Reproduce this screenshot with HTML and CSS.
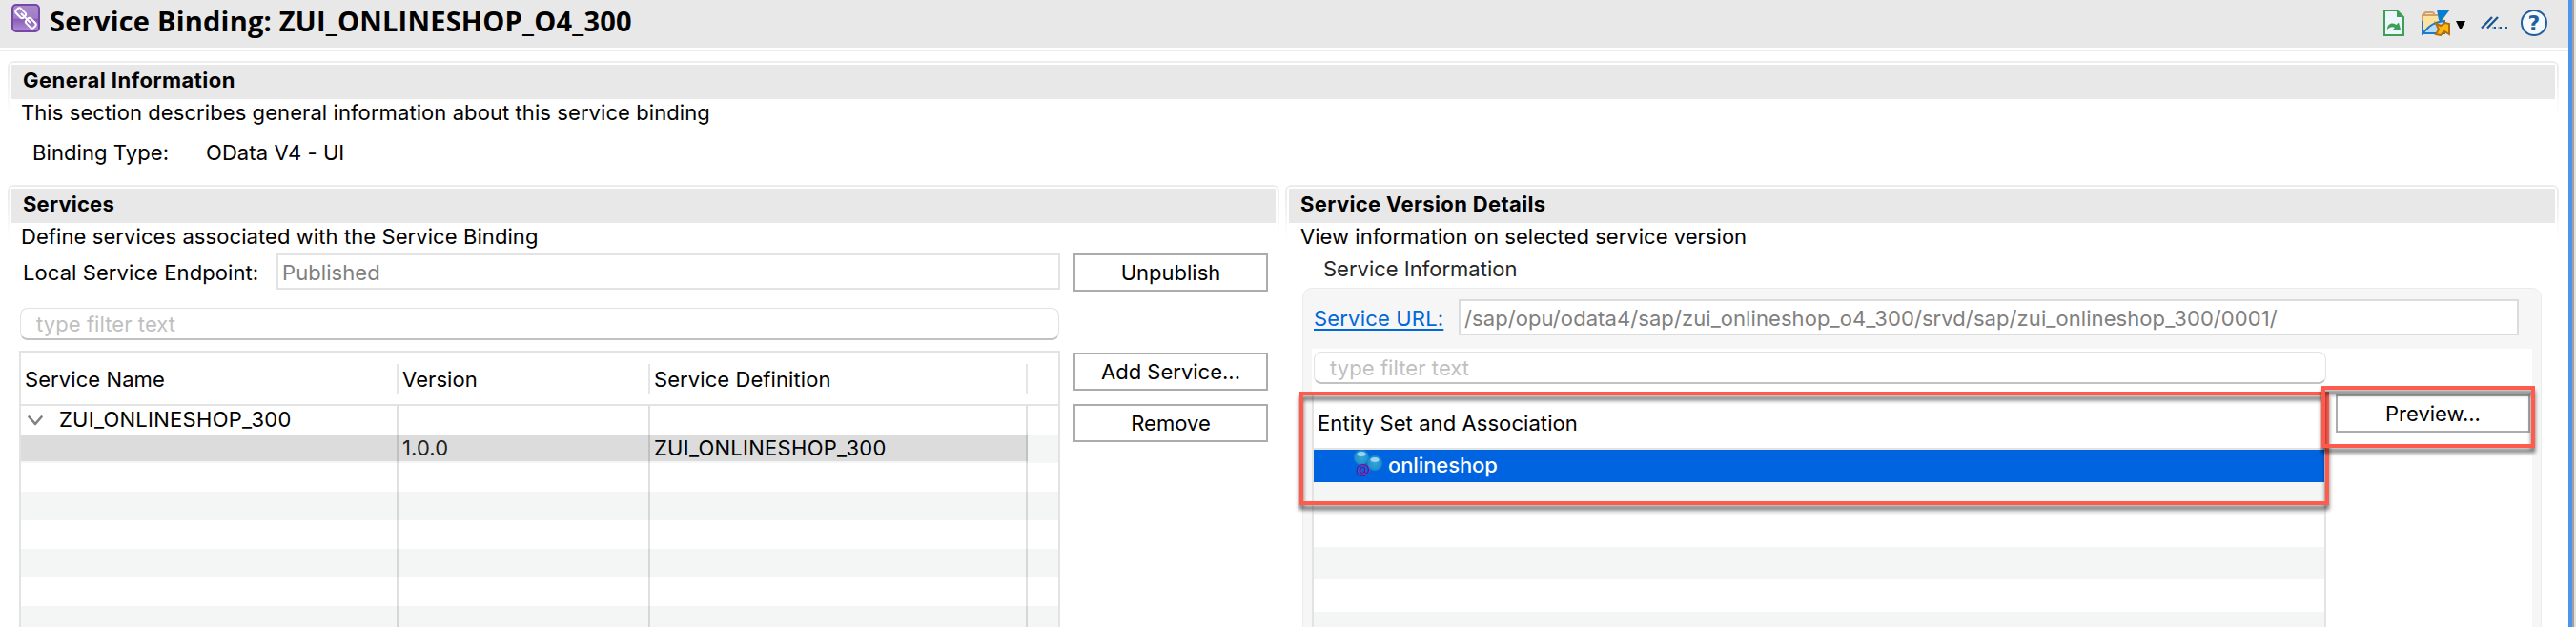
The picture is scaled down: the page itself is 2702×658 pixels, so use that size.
FILE: index.html
```html
<!DOCTYPE html>
<html lang="en">
<head>
<meta charset="utf-8">
<title>Service Binding</title>
<link rel="stylesheet" href="styles.css">
</head>
<body>
<main class="editor">
  <header class="form-head">
    <svg class="head-icon" width="30" height="30" viewBox="0 0 30 30">
      <defs><linearGradient id="pv" x1="0" y1="0" x2="0" y2="1"><stop offset="0" stop-color="#a98acb"/><stop offset=".5" stop-color="#a07dc8"/><stop offset=".55" stop-color="#8a5cb8"/><stop offset="1" stop-color="#b292d6"/></linearGradient></defs>
      <rect x="1" y="1" width="28" height="28" rx="4" fill="url(#pv)" stroke="#7548a8" stroke-width="2"/>
      <g fill="none" stroke="#fff" stroke-width="2" transform="rotate(45 15 15)">
        <rect x="2" y="11.500" width="11" height="7" rx="2.500"/>
        <rect x="17" y="11.500" width="11" height="7" rx="2.500"/>
        <path d="M8 15H22"/>
      </g>
    </svg>
    <h1 class="title">Service Binding: ZUI_ONLINESHOP_O4_300</h1>
    <div class="tools">
      <svg class="tool-doc" width="22" height="28" viewBox="0 0 22 28"><path d="M1 1H14L21 8V27H1Z" fill="#eef6fb" stroke="#3c9f57" stroke-width="2"/><path d="M14 1V8H21Z" fill="#3c9f57"/><path d="M4 21C4 15 9 13 13.500 16L16 13.500L18 21H10L12 19C9 17.500 6.500 18.500 4 21Z" fill="#3c9f57"/></svg>
      <svg class="tool-folder" width="30" height="28" viewBox="0 0 30 28"><path d="M3 6V4.500Q3 3 5 3H11Q13 3 13 5V6" fill="#f3e3c4" stroke="#c9a377" stroke-width="2"/><path d="M1 6H25V25H1Z" fill="#fbe3a0"/><path d="M1 13V6H17" fill="none" stroke="#d2a060" stroke-width="2"/><path d="M1 12V25L8 18Q14 13 24 12V25H1" fill="#b9dbfa" stroke="#2079ca" stroke-width="2"/><path d="M16 0H30L20 13L18 11Z" fill="#0b7dd0"/><path d="M15 14.500L20 17L25 14L29 15V26L24 23L20 27L15 26L18 21Z" fill="#fcb813" stroke="#b56f08" stroke-width="2"/></svg>
      <svg class="tool-caret" width="10" height="8" viewBox="0 0 10 8"><path d="M0 0H10L6 8H4Z" fill="#000"/></svg>
      <svg class="tool-trace" width="30" height="14" viewBox="0 0 30 14"><g stroke="#1c5791" stroke-width="2.400" fill="none"><path d="M1 12.500L12 1M7 12.500L18 1"/></g><g fill="#1c5791"><rect x="14" y="11" width="2" height="2"/><rect x="20" y="11" width="2" height="2"/><rect x="26" y="11" width="2" height="2"/></g><g fill="#8fb4d8"><rect x="12" y="11" width="2" height="2"/><rect x="18" y="11" width="2" height="2"/></g></svg>
      <span class="tool-help">?</span>
    </div>
  </header>

  <section class="section general">
    <h2 class="section-head head-general">General Information</h2>
    <p class="desc">This section describes general information about this service binding</p>
    <div class="binding"><span class="binding-label">Binding Type:</span><span>OData V4 - UI</span></div>
  </section>

  <div class="columns">
    <section class="section services">
      <h2 class="section-head">Services</h2>
      <p class="desc">Define services associated with the Service Binding</p>
      <div class="endpoint">
        <label class="endpoint-label">Local Service Endpoint:</label>
        <div class="field endpoint-field">Published</div>
        <button class="btn">Unpublish</button>
      </div>
      <div class="filter filter-left">type filter text</div>
      <div class="services-body">
        <div class="table">
          <div class="tr thead"><div class="th">Service Name</div><div class="th">Version</div><div class="th">Service Definition</div></div>
          <div class="tr"><div class="td parent"><svg class="chev" width="16" height="11" viewBox="0 0 16 11"><path d="M1.500 1.500L8 9L14.500 1.500" fill="none" stroke="#808080" stroke-width="2.600" stroke-linecap="round" stroke-linejoin="round"/></svg><span class="caps">ZUI_ONLINESHOP_300</span></div><div class="td"></div><div class="td"></div></div>
          <div class="tr alt selected"><div class="td"></div><div class="td dim">1.0.0</div><div class="td caps">ZUI_ONLINESHOP_300</div></div>
          <div class="tr"><div class="td"></div><div class="td"></div><div class="td"></div></div>
          <div class="tr alt"><div class="td"></div><div class="td"></div><div class="td"></div></div>
          <div class="tr"><div class="td"></div><div class="td"></div><div class="td"></div></div>
          <div class="tr alt"><div class="td"></div><div class="td"></div><div class="td"></div></div>
          <div class="tr"><div class="td"></div><div class="td"></div><div class="td"></div></div>
          <div class="tr alt"><div class="td"></div><div class="td"></div><div class="td"></div></div>
        </div>
        <div class="actions">
          <button class="btn">Add Service...</button>
          <button class="btn">Remove</button>
        </div>
      </div>
    </section>

    <section class="section details">
      <h2 class="section-head head-details">Service Version Details</h2>
      <p class="desc desc-details">View information on selected service version</p>
      <p class="group-title">Service Information</p>
      <div class="group">
        <div class="url-row">
          <a class="link">Service URL:</a>
          <div class="field url-field">/sap/opu/odata4/sap/zui_onlineshop_o4_300/srvd/sap/zui_onlineshop_300/0001/</div>
        </div>
        <div class="group-body">
          <div class="entity">
            <div class="filter filter-right">type filter text</div>
            <div class="entity-table">
              <div class="entity-head">Entity Set and Association</div>
              <div class="er active">
                <svg class="ent" width="30" height="32" viewBox="0 0 30 32"><defs><radialGradient id="bb" cx=".5" cy=".5" r=".5"><stop offset="0" stop-color="#32a5d8"/><stop offset=".7" stop-color="#2496d0"/><stop offset="1" stop-color="#1684cc"/></radialGradient></defs><circle cx="8" cy="8" r="8" fill="url(#bb)"/><circle cx="22" cy="14" r="8" fill="url(#bb)"/><ellipse cx="8" cy="4.500" rx="4.500" ry="2.500" fill="#9bd3f0"/><ellipse cx="22" cy="10.500" rx="4.500" ry="2.500" fill="#9bd3f0"/><text class="at" x="9.500" y="27" text-anchor="middle">@</text></svg>
                <span>onlineshop</span>
              </div>
              <div class="er alt"></div><div class="er"></div><div class="er alt"></div><div class="er"></div><div class="er alt"></div>
            </div>
          </div>
          <button class="btn preview">Preview...</button>
        </div>
        <div class="mark mark-table"></div>
        <div class="mark mark-preview"></div>
      </div>
    </section>
  </div>
</main>
<div class="edge"></div>
</body>
</html>
```
FILE: styles.css
```css
* { box-sizing: border-box; }
body {
  margin: 0; width: 2702px; height: 658px; overflow: hidden;
  display: flex; background: #fff; color: #000;
  font: 22px/26px Inter, "Liberation Sans", sans-serif;
  letter-spacing: .08px; white-space: nowrap;
}
h1, h2, p { margin: 0; font-size: inherit; }
.editor { width: 2694px; height: 658px; overflow: hidden; }
.edge { width: 8px; border-left: 4px solid #4b93ec; background: linear-gradient(90deg, #a3a09c 50%, #e0dfde 50%); }

.form-head { height: 50px; background: #e8e8e8; display: flex; align-items: flex-start; padding: 4px 0 0 12px; box-shadow: 0 2px #fff, 0 4px #ededed; }
.title { margin-left: 10px; font: bold 29px/35px "Open Sans", "Noto Sans", sans-serif; letter-spacing: .22px; }
.tools { margin-left: auto; display: flex; align-items: flex-start; }
.tool-doc { margin-top: 6px; }
.tool-folder { margin: 6px 0 0 18px; }
.tool-caret { margin: 18px 0 0 6px; }
.tool-trace { margin: 13px 0 0 16px; }
.tool-help {
  width: 28px; height: 28px; margin: 6px 22px 0 12px;
  border: 2px solid #225f9c; border-radius: 50%; background: #f5fafe; color: #225f9c;
  font: bold 22px/25px "DejaVu Sans", sans-serif; text-align: center; letter-spacing: 0;
}

.section { position: relative; padding: 4px 4px 0; }
.section::before {
  content: ""; position: absolute; inset: 0 0 auto; height: 54px;
  border: 2px solid #ececec; border-bottom: 0; border-radius: 6px 6px 0 0;
  -webkit-mask: linear-gradient(#000 10px, transparent); mask: linear-gradient(#000 10px, transparent);
}
.section-head { height: 36px; background: #e8e8e8; padding: 3px 0 0 12px; font-weight: 700; letter-spacing: .2px; position: relative; }
.head-general { letter-spacing: .48px; }
.head-details { letter-spacing: .36px; }
.desc { padding: 1px 0 0 10px; height: 27px; }
.general { margin: 14px 10px 0 8px; height: 130px; }
.binding { display: flex; padding: 16px 0 0 22px; }
.binding-label { width: 182px; }

.columns { display: flex; gap: 6px; margin-left: 8px; }
.services { width: 1334px; }
.endpoint { display: flex; margin-top: 5px; padding-left: 12px; }
.endpoint-label { width: 266px; padding-top: 7px; }
.field { height: 38px; border: 2px solid #e3e3e3; background: #fff; color: #808080; padding: 5px 0 0 4px; }
.endpoint-field { width: 822px; margin-right: 14px; }
.btn { width: 204px; height: 40px; border: 2px solid #acacac; border-radius: 0; background: #fff; color: #000; padding: 0; font: inherit; letter-spacing: 0; line-height: 30px; text-align: center; }
.filter { height: 34px; border: 1px solid #e2e2e2; border-bottom: 2px solid #c2c2c2; border-radius: 8px; background: #fff; color: #bfbfbf; padding: 3px 0 0 16px; }
.filter-left { width: 1090px; margin: 17px 0 0 9px; }
.services-body { display: flex; margin: 11px 0 0 8px; }
.table { width: 1092px; height: 300px; border: 2px solid #e3e3e3; }
.tr { display: grid; grid-template-columns: 396px 264px 396px; height: 30px; background: #fff; }
.tr.alt { background: #f4f5f5; }
.thead { height: 56px; padding: 12px 0; border-bottom: 2px solid #e3e3e3; }
.th { border-right: 2px solid #e6e6e6; height: 32px; padding: 3px 0 0 4px; }
.td { border-right: 2px solid rgba(0, 0, 0, .12); padding: 1px 0 0 4px; }
.selected .td { background: linear-gradient(#dcdcdc 28px, transparent 28px) border-box; }
.dim { color: #222; }
.caps { letter-spacing: .28px; }
.parent { display: flex; }
.chev { margin: 9px 17px 0 3px; }
.actions { display: flex; flex-direction: column; gap: 14px; margin: 2px 0 0 14px; }

.details { width: 1336px; }
.desc-details { padding-left: 12px; letter-spacing: .03px; }
.group-title { padding: 8px 0 0 36px; height: 41px; color: #262626; letter-spacing: 0; }
.group { position: relative; margin-left: 14px; width: 1300px; height: 380px; border: 1px solid #ebebeb; border-radius: 10px; background: #f6f6f6; padding: 11px 9px 0; }
.url-row { display: flex; padding-left: 2px; height: 52px; }
.link { width: 152px; padding-top: 7px; color: #0068da; letter-spacing: .18px; text-decoration: underline; text-decoration-thickness: 2px; text-underline-offset: 3px; text-decoration-skip-ink: none; }
.url-field { width: 1112px; border-color: #dcdcdc; }
.group-body { display: flex; background: #fff; height: 320px; padding-top: 3px; }
.entity { width: 1064px; }
.filter-right { margin-left: 2px; width: 1062px; }
.entity-table { margin-top: 9px; border: 2px solid #e3e3e3; }
.entity-head { height: 58px; border-bottom: 2px solid #e3e3e3; padding: 17px 0 0 4px; }
.er { height: 34px; background: #fff; display: flex; }
.er.alt { background: #f4f5f5; }
.er.active { background: #0064e1; color: #fff; font-weight: 500; letter-spacing: -.1px; }
.ent { margin: 0 6px 0 42px; }
.active span { padding-top: 3px; }
.at { font: 17px "Open Sans", sans-serif; fill: #8a0a86; }
.preview { margin: 45px 0 0 10px; }
.mark { position: absolute; border: 4.500px solid #ff5a4b; filter: drop-shadow(0 5px 2px rgba(0, 0, 0, .6)); }
.mark-table { left: -4px; top: 108px; width: 1080px; height: 119px; }
.mark-preview { left: 1068px; top: 102px; width: 224px; height: 65px; }
```
